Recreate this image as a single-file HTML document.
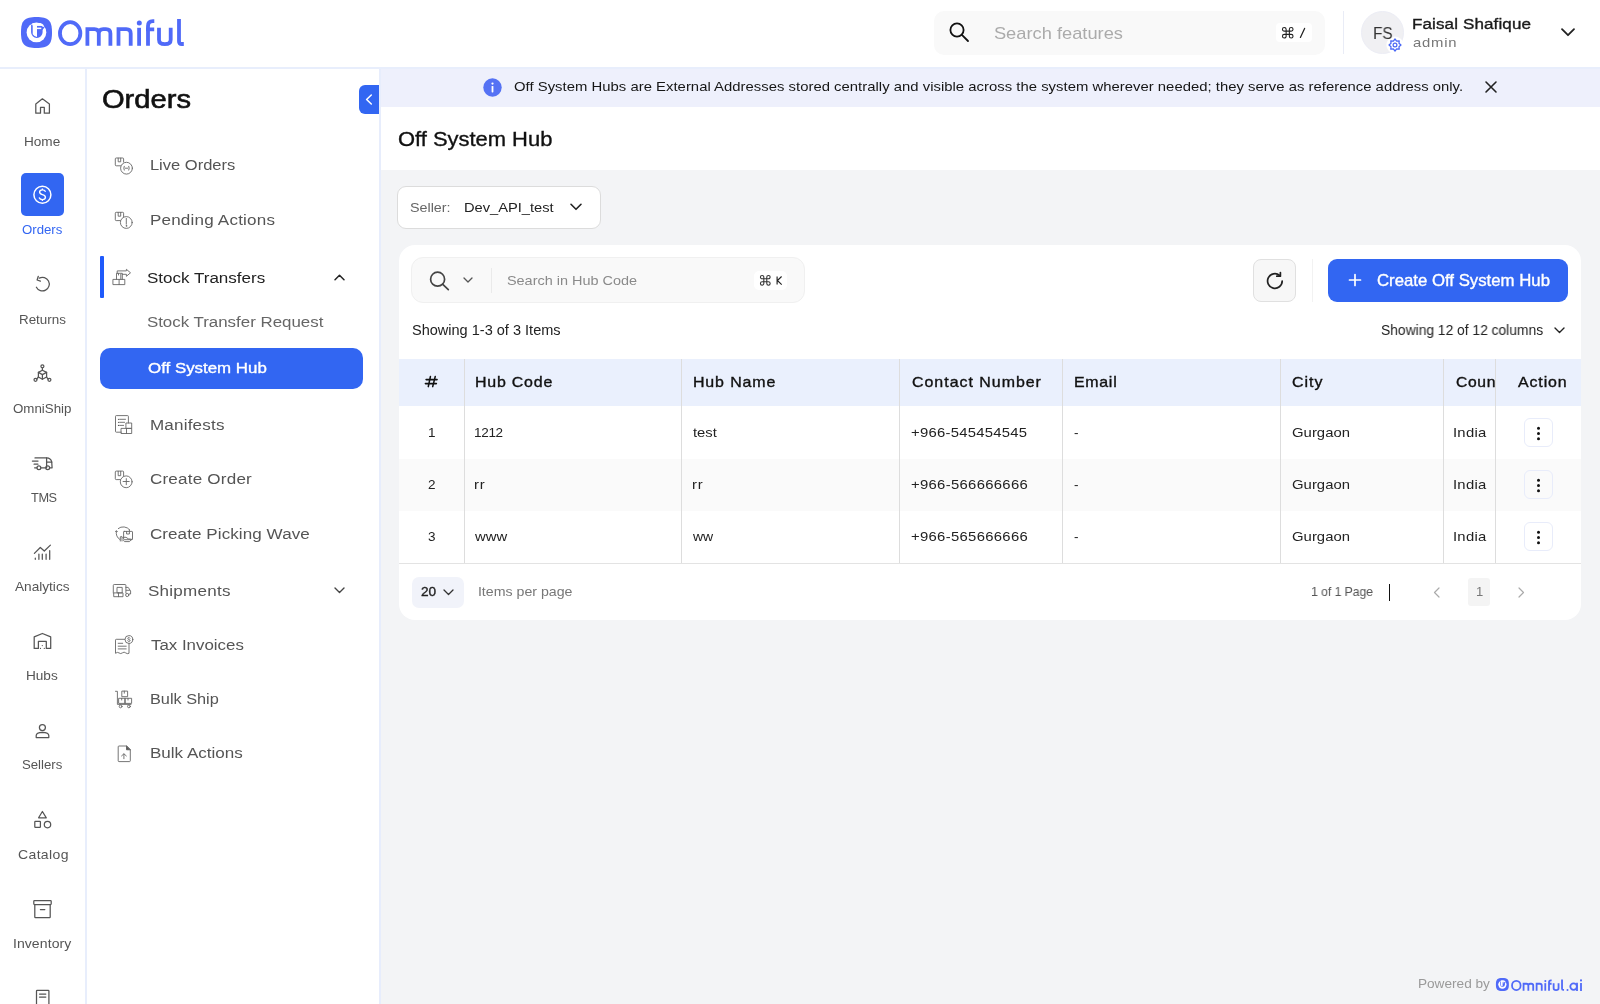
<!DOCTYPE html>
<html><head><meta charset="utf-8">
<style>
*{box-sizing:border-box;margin:0;padding:0}
html,body{width:1600px;height:1004px;overflow:hidden;background:#fff;font-family:"Liberation Sans",sans-serif;color:#222}
.a{position:absolute}
.t{position:absolute;white-space:nowrap;will-change:transform}
svg{position:absolute;display:block;overflow:visible}
.ic{fill:none;stroke:#555;stroke-width:1.25;stroke-linecap:round;stroke-linejoin:round}
.si{fill:none;stroke:#666;stroke-width:0.9;stroke-linecap:round;stroke-linejoin:round}
</style></head><body>

<!-- backgrounds -->
<div class="a" style="left:0;top:0;width:1600px;height:67px;background:#fff"></div>
<div class="a" style="left:0;top:67px;width:1600px;height:2px;background:#E8EEFC"></div>
<div class="a" style="left:85px;top:69px;width:2px;height:935px;background:#E8EEFC"></div>
<div class="a" style="left:379px;top:69px;width:2px;height:935px;background:#E7EDFC"></div>
<div class="a" style="left:381px;top:69px;width:1219px;height:935px;background:#F3F4F6"></div>

<!-- banner -->
<div class="a" style="left:381px;top:69px;width:1219px;height:38px;background:#EEF0FC"></div>
<svg style="left:482.6px;top:78px" width="19" height="19" viewBox="0 0 19 19"><circle cx="9.5" cy="9.5" r="9.2" fill="#5572F4"/><circle cx="9.5" cy="5.6" r="1.15" fill="#fff"/><rect x="8.6" y="8" width="1.8" height="6.4" rx="0.6" fill="#fff"/></svg>
<svg style="left:1485px;top:81px" width="12" height="12" viewBox="0 0 12 12"><path d="M1 1 L11 11 M11 1 L1 11" stroke="#222" stroke-width="1.6" stroke-linecap="round" fill="none"/></svg>

<!-- page header -->
<div class="a" style="left:381px;top:107px;width:1219px;height:63px;background:#fff"></div>

<!-- seller dropdown -->
<div class="a" style="left:397px;top:186px;width:204px;height:43px;background:#fff;border:1px solid #DCDCDC;border-radius:9px"></div>
<svg style="left:570px;top:203px" width="12" height="8" viewBox="0 0 12 8"><path d="M1 1.3 L6 6.3 L11 1.3" stroke="#222" stroke-width="1.6" fill="none" stroke-linecap="round" stroke-linejoin="round"/></svg>

<!-- card -->
<div class="a" style="left:399px;top:245px;width:1182px;height:375px;background:#fff;border-radius:16px"></div>
<div class="a" style="left:411px;top:257px;width:394px;height:46px;background:#F9F9F9;border:1px solid #F0F0F0;border-radius:12px"></div>
<svg style="left:429px;top:271px" width="21" height="20" viewBox="0 0 21 20"><circle cx="8.6" cy="8.2" r="7" stroke="#444" stroke-width="1.7" fill="none"/><path d="M13.8 13.4 L19.3 18.6" stroke="#444" stroke-width="1.7" stroke-linecap="round"/></svg>
<svg style="left:463px;top:277px" width="10" height="7" viewBox="0 0 10 7"><path d="M1 1 L5 5 L9 1" stroke="#555" stroke-width="1.3" fill="none" stroke-linecap="round" stroke-linejoin="round"/></svg>
<div class="a" style="left:491px;top:268px;width:1px;height:25px;background:#EAEAEA"></div>
<div class="a" style="left:754px;top:271px;width:33px;height:19px;background:#fff;border-radius:5px"></div>

<div class="a" style="left:1253px;top:259px;width:43px;height:43px;background:#F7F7F7;border:1px solid #E0E0E0;border-radius:8px"></div>
<svg style="left:1265px;top:271px" width="20" height="20" viewBox="0 0 20 20"><path d="M17.2 10 A7.3 7.3 0 1 1 14.6 4.4" stroke="#222" stroke-width="1.7" fill="none" stroke-linecap="round"/><path d="M15.4 1.6 V5.2 H11.8" stroke="#222" stroke-width="1.7" fill="none" stroke-linecap="round" stroke-linejoin="round"/></svg>
<div class="a" style="left:1312px;top:259px;width:1px;height:43px;background:#F2F2F2"></div>
<div class="a" style="left:1328px;top:259px;width:240px;height:43px;background:#3266F2;border-radius:9px"></div>
<svg style="left:1349px;top:274px" width="12" height="12" viewBox="0 0 12 12"><path d="M6 0.5 V11.5 M0.5 6 H11.5" stroke="#fff" stroke-width="1.7" stroke-linecap="round"/></svg>
<svg style="left:1554px;top:327px" width="11" height="7" viewBox="0 0 11 7"><path d="M1 1 L5.5 5.5 L10 1" stroke="#222" stroke-width="1.4" fill="none" stroke-linecap="round" stroke-linejoin="round"/></svg>

<!-- table -->
<div class="a" style="left:399px;top:359px;width:1182px;height:47px;background:#EAF0FD"></div>
<div class="a" style="left:399px;top:459px;width:1182px;height:52px;background:#FAFAFA"></div>
<div class="a" style="left:399px;top:563px;width:1182px;height:1px;background:#E3E3E3"></div>
<div class="a" style="left:464px;top:359px;width:1px;height:204px;background:#DDDDDD"></div>
<div class="a" style="left:681px;top:359px;width:1px;height:204px;background:#DDDDDD"></div>
<div class="a" style="left:899px;top:359px;width:1px;height:204px;background:#DDDDDD"></div>
<div class="a" style="left:1062px;top:359px;width:1px;height:204px;background:#DDDDDD"></div>
<div class="a" style="left:1280px;top:359px;width:1px;height:204px;background:#DDDDDD"></div>
<div class="a" style="left:1443px;top:359px;width:1px;height:204px;background:#DDDDDD"></div>
<div class="a" style="left:1495px;top:359px;width:1px;height:204px;background:#DDDDDD"></div>

<div class="a" style="left:1524px;top:418px;width:29px;height:29px;background:transparent;border:1px solid #E8ECFA;border-radius:6px"></div>
<div class="a" style="left:1524px;top:470px;width:29px;height:29px;background:transparent;border:1px solid #E8ECFA;border-radius:6px"></div>
<div class="a" style="left:1524px;top:522px;width:29px;height:29px;background:transparent;border:1px solid #E8ECFA;border-radius:6px"></div>
<svg style="left:1536px;top:426px" width="5" height="15" viewBox="0 0 5 15"><circle cx="2.5" cy="2.3" r="1.5" fill="#111"/><circle cx="2.5" cy="7.5" r="1.5" fill="#111"/><circle cx="2.5" cy="12.7" r="1.5" fill="#111"/></svg>
<svg style="left:1536px;top:478px" width="5" height="15" viewBox="0 0 5 15"><circle cx="2.5" cy="2.3" r="1.5" fill="#111"/><circle cx="2.5" cy="7.5" r="1.5" fill="#111"/><circle cx="2.5" cy="12.7" r="1.5" fill="#111"/></svg>
<svg style="left:1536px;top:530px" width="5" height="15" viewBox="0 0 5 15"><circle cx="2.5" cy="2.3" r="1.5" fill="#111"/><circle cx="2.5" cy="7.5" r="1.5" fill="#111"/><circle cx="2.5" cy="12.7" r="1.5" fill="#111"/></svg>

<svg style="left:418px;top:370px" width="27" height="24" viewBox="418 370 27 24"><path d="M426.1 379.6 H437.1 M425.4 383.6 H436.4 M430.4 376.6 L428.3 386.6 M435.2 376.6 L432.7 386.6" stroke="#111" stroke-width="1.55" stroke-linecap="round" fill="none"/></svg>
<!-- pagination -->
<div class="a" style="left:412px;top:577px;width:52px;height:31px;background:#F1F3FA;border-radius:7px"></div>
<svg style="left:443px;top:589px" width="11" height="7" viewBox="0 0 11 7"><path d="M1 1 L5.5 5.5 L10 1" stroke="#333" stroke-width="1.3" fill="none" stroke-linecap="round" stroke-linejoin="round"/></svg>
<div class="a" style="left:1389px;top:584px;width:1px;height:17px;background:#111"></div>
<svg style="left:1433px;top:587px" width="8" height="11" viewBox="0 0 8 11"><path d="M6 1 L1.5 5.5 L6 10" stroke="#AAA" stroke-width="1.2" fill="none" stroke-linecap="round" stroke-linejoin="round"/></svg>
<div class="a" style="left:1468px;top:578px;width:22px;height:28px;background:#F4F4F4;border-radius:3px"></div>
<svg style="left:1517px;top:587px" width="8" height="11" viewBox="0 0 8 11"><path d="M2 1 L6.5 5.5 L2 10" stroke="#AAA" stroke-width="1.2" fill="none" stroke-linecap="round" stroke-linejoin="round"/></svg>

<!-- header -->
<svg style="left:21px;top:17px" width="31" height="31" viewBox="0 0 31 31">
  <path d="M15.5 0 C27.5 0 31 3.5 31 15.5 C31 27.5 27.5 31 15.5 31 C3.5 31 0 27.5 0 15.5 C0 3.5 3.5 0 15.5 0 Z" fill="#506AF8"/>
  <circle cx="15.45" cy="15.45" r="9.85" fill="#fff"/>
  <path d="M10.1 8.3 Q10.1 7.5 10.9 7.5 Q11.7 7.5 11.7 8.3 V8.8 H20.3 L23.6 10.4 Q21.6 11.8 21.6 13.2 V15.2 A5.75 5.75 0 0 1 10.1 15.2 Z" fill="#506AF8"/>
  <path d="M11.7 6 H19.2 Q21.2 6.4 22.6 8.1 L22.1 9.6 L20.3 8.8 H16 V19.9 Q13.2 19.5 11.7 17.3 Z" fill="#fff"/>
  <rect x="15.6" y="10.6" width="4.7" height="1.5" fill="#fff"/>
</svg>
<svg style="left:0;top:0" width="200" height="60" viewBox="0 0 200 60"><g fill="none" stroke="#506AF8" stroke-width="3.8">
  <ellipse cx="70.15" cy="33.2" rx="10.2" ry="11"/>
  <path d="M87.4 45.8 V29.2 H94.4 Q98.8 29.2 98.8 33.6 V45.8 M98.8 33.6 Q98.8 29.2 103.2 29.2 H106 Q110.4 29.2 110.4 33.6 V45.8"/>
  <path d="M118.5 45.8 V29.2 H126.3 Q130.7 29.2 130.7 33.6 V45.8"/>
  <path d="M139.1 45.8 V27.8"/>
  <path d="M148 45.8 V26 Q148 21.2 152.8 21.2 H154.3 M146 29.3 H154.2"/>
  <path d="M159 27.8 V39.8 Q159 44.2 164.85 44.2 Q170.7 44.2 170.7 39.8 V27.8"/>
  <path d="M179 19 V41.2 Q179 44 181.8 44 H183.8"/>
</g><circle cx="139.3" cy="22.9" r="2.5" fill="#506AF8"/></svg>
<div class="a" style="left:934px;top:11px;width:391px;height:44px;background:#F9F9F9;border-radius:10px"></div>
<svg style="left:949px;top:22px" width="21" height="21" viewBox="0 0 21 21"><circle cx="8" cy="8" r="6.6" stroke="#111" stroke-width="1.8" fill="none"/><path d="M12.9 12.9 L19 19" stroke="#111" stroke-width="1.8" stroke-linecap="round"/></svg>
<div class="a" style="left:1276px;top:23px;width:36px;height:19px;background:#fff;border-radius:4px"></div>
<div class="a" style="left:1343px;top:11px;width:1px;height:43px;background:#E9ECF6"></div>
<div class="a" style="left:1361px;top:11px;width:43px;height:43px;border-radius:50%;background:#F0F0F3;border:1px solid #ECEDF5"></div>
<svg style="left:1385.7px;top:35.6px" width="18" height="18" viewBox="0 0 18 18"><circle cx="9" cy="9" r="8.6" fill="#fff"/><path d="M9.00 3.00 L10.65 5.03 L13.24 4.76 L12.97 7.35 L15.00 9.00 L12.97 10.65 L13.24 13.24 L10.65 12.97 L9.00 15.00 L7.35 12.97 L4.76 13.24 L5.03 10.65 L3.00 9.00 L5.03 7.35 L4.76 4.76 L7.35 5.03 Z" stroke="#4A68F5" stroke-width="1.25" fill="none" stroke-linejoin="round"/><circle cx="9" cy="9" r="1.9" stroke="#4A68F5" stroke-width="1.2" fill="none"/></svg>
<svg style="left:1561px;top:28px" width="14" height="9" viewBox="0 0 14 9"><path d="M1 1.2 L7 7.2 L13 1.2" stroke="#222" stroke-width="1.8" fill="none" stroke-linecap="round" stroke-linejoin="round"/></svg>

<svg style="left:1282.4px;top:27px" width="11.5" height="11.5" viewBox="0 0 10 10"><path d="M3.6 3.6 H2 A1.6 1.6 0 1 1 3.6 2 V8 A1.6 1.6 0 1 1 2 6.4 H8 A1.6 1.6 0 1 1 6.4 8 V2 A1.6 1.6 0 1 1 8 3.6 Z" stroke="#222" stroke-width="0.95" fill="none"/></svg>
<svg style="left:1295px;top:25px" width="14" height="15" viewBox="1295 25 14 15"><path d="M1304.6 28.4 L1300.4 37.4" stroke="#222" stroke-width="1.25" stroke-linecap="round"/></svg>
<svg style="left:759.6px;top:274.6px" width="10.6" height="10.6" viewBox="0 0 10 10"><path d="M3.6 3.6 H2 A1.6 1.6 0 1 1 3.6 2 V8 A1.6 1.6 0 1 1 2 6.4 H8 A1.6 1.6 0 1 1 6.4 8 V2 A1.6 1.6 0 1 1 8 3.6 Z" stroke="#333" stroke-width="1.0" fill="none"/></svg>
<svg style="left:772px;top:272px" width="14" height="16" viewBox="772 272 14 16"><path d="M777.1 276.6 V284.6 M781.6 276.5 L777.4 280.5 L781.7 284.6" stroke="#222" stroke-width="1.15" fill="none" stroke-linejoin="miter"/></svg>
<!-- rail icons -->
<!-- home -->
<svg style="left:25px;top:88px" width="35" height="35" viewBox="0 0 35 35"><path class="ic" d="M10.8 25.2 V16 L17.4 10.8 L24.4 16 V25.2 H19.3 V19.3 H15.5 V25.2 Z"/></svg>
<!-- orders active -->
<div class="a" style="left:21px;top:173px;width:43px;height:43px;background:#3266F2;border-radius:5px"></div>
<svg style="left:25px;top:177px" width="35" height="35" viewBox="0 0 35 35"><circle cx="17.4" cy="17.8" r="8.5" stroke="#fff" stroke-width="1.5" fill="none"/><path d="M20.2 14.3 Q19.6 12.9 17.4 12.9 Q14.6 12.9 14.6 15.1 Q14.6 16.9 17.4 17.6 Q20.4 18.3 20.4 20.3 Q20.4 22.6 17.4 22.6 Q15 22.6 14.4 21" stroke="#fff" stroke-width="1.4" fill="none" stroke-linecap="round"/><path d="M17.4 11.6 V12.9 M17.4 22.6 V24" stroke="#fff" stroke-width="1.3"/></svg>
<!-- returns -->
<svg style="left:25px;top:266px" width="35" height="35" viewBox="0 0 35 35"><path class="ic" d="M11.4 21.2 A6.8 6.8 0 1 0 14.3 12.1"/><path class="ic" d="M13.3 10.3 L12.1 14 L15.4 15.2"/></svg>
<!-- omniship -->
<svg style="left:25px;top:355px" width="35" height="35" viewBox="0 0 35 35"><g class="ic"><circle cx="17.4" cy="11.3" r="1.5"/><path d="M17.4 12.8 V15.2"/><path d="M13.4 17.4 L17.4 15.2 L21.6 17.4 V22 L17.4 24.2 L13.4 22 Z"/><path d="M13.4 17.4 L17.4 19.6 L21.6 17.4 M17.4 19.6 V24.2"/><circle cx="10.5" cy="24.8" r="1.5"/><circle cx="24.4" cy="24.8" r="1.5"/><path d="M11.8 24 L13.4 22 M23.1 24 L21.6 22"/></g></svg>
<!-- tms -->
<svg style="left:25px;top:445px" width="35" height="35" viewBox="0 0 35 35"><g class="ic"><path d="M10 12.9 H21.6 V22.8"/><path d="M21.6 12.9 Q25.8 13 26.7 16.8 L27.1 22.8 H25"/><path d="M21.6 17 H26.8"/><path d="M7.4 16 H13 M9.1 19.2 H12.9 M9.6 22.8 H11.9 M15.9 22.8 H20.6"/><circle cx="13.9" cy="22.8" r="1.9"/><circle cx="22.7" cy="22.8" r="1.9"/></g></svg>
<!-- analytics -->
<svg style="left:25px;top:535px" width="35" height="35" viewBox="0 0 35 35"><g class="ic"><path d="M9.4 18.4 L15.3 12.5 L19.3 16 L25.4 10.1"/><path d="M10.3 23.2 V24.3 M13.9 19 V24.3 M17.3 19 V24.3 M21.1 19 V24.3 M24.7 15.6 V24.3"/></g></svg>
<!-- hubs -->
<svg style="left:25px;top:625px" width="35" height="35" viewBox="0 0 35 35"><g class="ic"><path d="M9.2 23.4 V11.9 L17.4 8.5 L25.7 11.9 V23.4 H21.3 V16.4 H13.4 V23.4 Z"/></g><circle cx="17.3" cy="20.6" r="0.6" fill="#555"/><circle cx="15.5" cy="23.4" r="0.6" fill="#555"/><circle cx="19.3" cy="23.4" r="0.6" fill="#555"/></svg>
<!-- sellers -->
<svg style="left:25px;top:715px" width="35" height="35" viewBox="0 0 35 35"><g class="ic"><circle cx="17.4" cy="12.5" r="3"/><path d="M11.2 22.6 V20.4 Q11.2 17.4 17.4 17.3 Q23.8 17.4 23.8 20.4 V22.6 Z"/></g></svg>
<!-- catalog -->
<svg style="left:25px;top:800px" width="35" height="35" viewBox="0 0 35 35"><g class="ic"><path d="M17.4 11.5 L13.6 17.8 H21.3 Z"/><rect x="9.8" y="21.3" width="5.6" height="6" rx="0.6"/><circle cx="22.5" cy="24.6" r="3.2"/></g></svg>
<!-- inventory -->
<svg style="left:25px;top:890px" width="35" height="35" viewBox="0 0 35 35"><g class="ic"><rect x="8.8" y="10.6" width="17.4" height="3.9" rx="0.7"/><path d="M9.8 14.5 V27 Q9.8 27.6 10.4 27.6 H24.6 Q25.2 27.6 25.2 27 V14.5"/><path d="M15.4 19.5 H19.8"/></g></svg>
<!-- last (cut) -->
<svg style="left:25px;top:980px" width="35" height="35" viewBox="0 0 35 35"><g class="ic"><path d="M11.5 24 V11 Q11.5 10.3 12.2 10.3 H23.2 Q23.9 10.3 23.9 11 V24"/><path d="M14.5 14 H20.8 M14.5 17 H20.8"/></g></svg>

<!-- sidebar -->
<div class="a" style="left:359px;top:85px;width:20px;height:29px;background:#3266F2;border-radius:6px 0 0 6px"></div>
<svg style="left:365px;top:94px" width="8" height="11" viewBox="0 0 8 11"><path d="M6.3 1 L1.6 5.5 L6.3 10" stroke="#fff" stroke-width="1.5" fill="none" stroke-linecap="round" stroke-linejoin="round"/></svg>
<div class="a" style="left:100px;top:256px;width:4.3px;height:41.5px;background:#1F5AFB;border-radius:1px"></div>
<div class="a" style="left:100px;top:348px;width:263px;height:41px;background:#3266F2;border-radius:10px"></div>
<svg style="left:334px;top:273px" width="11" height="8" viewBox="0 0 11 8"><path d="M1 6.8 L5.5 2.3 L10 6.8" stroke="#222" stroke-width="1.5" fill="none" stroke-linecap="round" stroke-linejoin="round"/></svg>
<svg style="left:334px;top:587px" width="11" height="8" viewBox="0 0 11 8"><path d="M1 1 L5.5 5.5 L10 1" stroke="#444" stroke-width="1.4" fill="none" stroke-linecap="round" stroke-linejoin="round"/></svg>

<!-- live orders -->
<svg style="left:108px;top:150px" width="32" height="32" viewBox="0 0 32 32"><g class="si"><path d="M12.5 15.8 H8.2 Q7.3 15.8 7.3 14.9 V8.9 Q7.3 8 8.2 8 H14.7 Q15.6 8 15.6 8.9 V12"/><path d="M10.2 8.2 V11.8 H12.7 V8.2"/><circle cx="18.5" cy="18.2" r="5.9"/><path d="M16.2 16.3 Q15.3 18.2 16.2 20.1 M20.8 16.3 Q21.7 18.2 20.8 20.1 M17.3 18.2 H19.7"/></g></svg>
<!-- pending -->
<svg style="left:108px;top:205px" width="32" height="32" viewBox="0 0 32 32"><g class="si"><path d="M12.4 15.6 H8.2 Q7.3 15.6 7.3 14.7 V8.2 Q7.3 7.3 8.2 7.3 H14.7 Q15.6 7.3 15.6 8.2 V11.6"/><path d="M10.2 7.5 V11.2 H12.7 V7.5"/><circle cx="18.3" cy="17.5" r="5.9"/><path d="M18.3 13.4 V19.2"/><circle cx="18.3" cy="20.9" r="0.4"/></g></svg>
<!-- stock transfers -->
<svg style="left:106px;top:262px" width="32" height="32" viewBox="0 0 32 32"><g class="si"><rect x="7.3" y="17.4" width="11.5" height="5.2"/><path d="M13.1 17.4 V22.6"/><path d="M10.5 17.4 V11.3 H16.3 V17.4"/><path d="M11.2 11.3 V8.9 H20.4 V7.3 L24.5 10.8 L20.4 14.3 V12.3 H16.3"/><path d="M12.5 11.5 V13 M14.8 12.3 V17.4"/></g></svg>
<!-- manifests -->
<svg style="left:108px;top:408px" width="32" height="32" viewBox="0 0 32 32"><g class="si"><path d="M13.3 24.2 H8.3 Q7.5 24.2 7.5 23.4 V8.4 Q7.5 7.6 8.3 7.6 H19.6 Q20.4 7.6 20.4 8.4 V15"/><path d="M11.6 11.3 H17.5 M11.6 14.3 H16.6 M11.6 17.4 H15.6"/><rect x="13.4" y="20.4" width="10.3" height="5.1"/><path d="M18.5 20.4 V25.5"/><rect x="18.3" y="15" width="5.4" height="5.4"/></g><circle cx="10.5" cy="11.3" r="0.6" fill="#555"/><circle cx="10.5" cy="14.3" r="0.6" fill="#555"/><circle cx="10.5" cy="17.4" r="0.6" fill="#555"/></svg>
<!-- create order -->
<svg style="left:108px;top:463px" width="32" height="32" viewBox="0 0 32 32"><g class="si"><path d="M12.4 16.6 H8.2 Q7.3 16.6 7.3 15.7 V9 Q7.3 8.1 8.2 8.1 H14.7 Q15.6 8.1 15.6 9 V12.9"/><path d="M10.2 8.3 V12.7 H12.7 V8.3"/><circle cx="18.2" cy="18.8" r="5.9"/><path d="M15.1 18.5 H21.2 M18.3 15.6 V21.7"/></g></svg>
<!-- picking wave -->
<svg style="left:108px;top:518px" width="32" height="32" viewBox="0 0 32 32"><g class="si"><path d="M10.3 10.5 A8 8 0 0 1 21.6 11.8"/><path d="M8.4 13.3 A8 8 0 0 0 11.8 21.5"/><path d="M7.5 13.6 L8.4 12.6 L9.4 13.6"/><rect x="15.6" y="13.4" width="8.9" height="8.3" rx="0.6"/><path d="M18.6 13.4 V16 H21.4 V11.8"/><path d="M12.3 23 V18.8 Q13.2 18.1 14 18.8 V23"/><path d="M14.8 19.3 H18 Q19.6 21.3 23.8 21.3 L21.5 23.6 H16.6 L15.5 22.6"/></g></svg>
<!-- shipments -->
<svg style="left:106px;top:574px" width="32" height="32" viewBox="0 0 32 32"><g class="si"><path d="M7.3 19 V11.4 Q7.3 10.5 8.2 10.5 H19 Q19.9 10.5 19.9 11.4 V19"/><path d="M19.9 13.4 H22.2 L24.6 17 V20 H23.3"/><path d="M20.3 16.3 H23.5"/><rect x="8.1" y="18.9" width="8.9" height="3.8"/><path d="M12.5 18.9 V22.7"/><rect x="11.4" y="13.4" width="4.8" height="5.5"/><circle cx="21.2" cy="21" r="1.6"/></g></svg>
<!-- tax -->
<svg style="left:108px;top:628px" width="32" height="32" viewBox="0 0 32 32"><g class="si"><path d="M16.8 11.3 H8.3 Q7.5 11.3 7.5 12.1 V25.3 Q9.5 23.7 11 24.9 Q12.8 26.3 14.3 24.9 Q16.2 23.4 17.7 24.9 Q19.2 26.2 21 25.3 V15.4"/><path d="M10.2 15.3 H14.7 M10.2 18.2 H18.2 M10.2 20.9 H18.2"/><circle cx="20.9" cy="11.5" r="3.9"/><path d="M22 10.2 Q21.6 9.6 20.9 9.6 Q19.8 9.6 19.8 10.5 Q19.8 11.3 20.9 11.5 Q22.1 11.7 22.1 12.6 Q22.1 13.4 20.9 13.4 Q20 13.4 19.7 12.8"/></g></svg>
<!-- bulk ship -->
<svg style="left:108px;top:683px" width="32" height="32" viewBox="0 0 32 32"><g class="si"><path d="M7.5 8.3 H9.4 V21.4 H23"/><rect x="14.2" y="8.1" width="5.4" height="5.6"/><rect x="11" y="15.3" width="6.2" height="5.1"/><rect x="17.2" y="15.3" width="6.4" height="5.1"/><path d="M16.3 8.1 V10.2 M13.7 15.3 V17 M20 15.3 V17"/><circle cx="12.6" cy="23.4" r="1.4"/><circle cx="20.9" cy="23.4" r="1.4"/></g></svg>
<!-- bulk actions -->
<svg style="left:108px;top:738px" width="32" height="32" viewBox="0 0 32 32"><g class="si"><path d="M18.5 8 H11 Q10.2 8 10.2 8.8 V22.8 Q10.2 23.6 11 23.6 H21.5 Q22.3 23.6 22.3 22.8 V11.8 Z"/><path d="M18.5 8 V11.8 H22.3"/><path d="M15.9 20.7 V16 M13.6 17.9 L15.9 15.8 L18.3 17.9"/></g><path d="M18.5 8 V11.8 H22.3 Z" fill="#555"/></svg>

<!-- footer logo -->
<svg style="left:1480px;top:970px" width="120" height="30" viewBox="1480 970 120 30">
<g transform="translate(1495.9 978.1) scale(0.4194)">
  <path d="M15.5 0 C27.5 0 31 3.5 31 15.5 C31 27.5 27.5 31 15.5 31 C3.5 31 0 27.5 0 15.5 C0 3.5 3.5 0 15.5 0 Z" fill="#506AF8"/>
  <circle cx="15.45" cy="15.45" r="9.85" fill="#fff"/>
  <path d="M10.1 8.3 Q10.1 7.5 10.9 7.5 Q11.7 7.5 11.7 8.3 V8.8 H20.3 L23.6 10.4 Q21.6 11.8 21.6 13.2 V15.2 A5.75 5.75 0 0 1 10.1 15.2 Z" fill="#506AF8"/>
  <path d="M11.7 6 H19.2 Q21.2 6.4 22.6 8.1 L22.1 9.6 L20.3 8.8 H16 V19.9 Q13.2 19.5 11.7 17.3 Z" fill="#fff"/>
  <rect x="15.6" y="10.6" width="4.7" height="1.5" fill="#fff"/>
</g>
<g transform="translate(1486.85 971.47) scale(0.42)"><g fill="none" stroke="#506AF8" stroke-width="4.3">
  <ellipse cx="70.15" cy="33.2" rx="10.2" ry="11"/>
  <path d="M87.4 45.8 V29.2 H94.4 Q98.8 29.2 98.8 33.6 V45.8 M98.8 33.6 Q98.8 29.2 103.2 29.2 H106 Q110.4 29.2 110.4 33.6 V45.8"/>
  <path d="M118.5 45.8 V29.2 H126.3 Q130.7 29.2 130.7 33.6 V45.8"/>
  <path d="M139.1 45.8 V27.8"/>
  <path d="M148 45.8 V26 Q148 21.2 152.8 21.2 H154.3 M146 29.3 H154.2"/>
  <path d="M159 27.8 V39.8 Q159 44.2 164.85 44.2 Q170.7 44.2 170.7 39.8 V27.8"/>
  <path d="M179 19 V41.2 Q179 44 181.8 44 H183.8"/>
</g><circle cx="139.3" cy="22.9" r="2.5" fill="#506AF8"/></g>
<circle cx="1567.5" cy="989.9" r="1" fill="#506AF8"/>
<circle cx="1573.6" cy="986.6" r="3.3" stroke="#506AF8" stroke-width="1.8" fill="none"/>
<path d="M1577 982.7 V991" stroke="#506AF8" stroke-width="1.8"/>
<path d="M1581 983 V991" stroke="#506AF8" stroke-width="1.8"/>
<circle cx="1581" cy="980.4" r="1.05" fill="#506AF8"/>
</svg>
<div class="t" style="left:993.75px;top:14.00px;font-size:17.00px;line-height:40px;letter-spacing:0.000px;color:#ABABAB;transform:scaleX(1.0756);transform-origin:1.00px 0;">Search features</div>
<div class="t" style="left:1280.30px;top:13.00px;font-size:14.50px;line-height:40px;letter-spacing:0.000px;color:#333333;transform:scaleX(1.0810);transform-origin:2.00px 0;display:none;">⌘ /</div>
<div class="t" style="left:1372.70px;top:13.00px;font-size:16.25px;line-height:40px;letter-spacing:-0.053px;color:#333333;transform:scaleX(0.9500);transform-origin:1.00px 0;">FS</div>
<div class="t" style="left:1412.40px;top:4.00px;font-size:15.50px;line-height:40px;letter-spacing:0.104px;color:#1A1A1A;transform:scaleX(1.1000);transform-origin:1.00px 0;-webkit-text-stroke:0.35px currentColor;">Faisal Shafique</div>
<div class="t" style="left:1413.40px;top:23.00px;font-size:13.50px;line-height:40px;letter-spacing:0.682px;color:#777777;transform:scaleX(1.1000);transform-origin:0.00px 0;">admin</div>
<div class="t" style="left:24.00px;top:122.00px;font-size:12.75px;line-height:40px;letter-spacing:0.000px;color:#555555;transform:scaleX(1.0667);transform-origin:1.00px 0;">Home</div>
<div class="t" style="left:22.00px;top:210.00px;font-size:12.75px;line-height:40px;letter-spacing:0.000px;color:#3366F2;transform:scaleX(1.0359);transform-origin:0.00px 0;">Orders</div>
<div class="t" style="left:18.70px;top:300.00px;font-size:12.75px;line-height:40px;letter-spacing:0.000px;color:#555555;transform:scaleX(1.0512);transform-origin:1.00px 0;">Returns</div>
<div class="t" style="left:12.90px;top:389.00px;font-size:12.75px;line-height:40px;letter-spacing:0.000px;color:#555555;transform:scaleX(1.0446);transform-origin:0.00px 0;">OmniShip</div>
<div class="t" style="left:31.20px;top:478.00px;font-size:12.75px;line-height:40px;letter-spacing:-0.400px;color:#555555;transform:scaleX(1.0000);transform-origin:0.00px 0;">TMS</div>
<div class="t" style="left:14.80px;top:567.00px;font-size:12.75px;line-height:40px;letter-spacing:0.000px;color:#555555;transform:scaleX(1.0686);transform-origin:0.00px 0;">Analytics</div>
<div class="t" style="left:25.80px;top:656.00px;font-size:12.75px;line-height:40px;letter-spacing:0.000px;color:#555555;transform:scaleX(1.0690);transform-origin:1.00px 0;">Hubs</div>
<div class="t" style="left:22.10px;top:745.00px;font-size:12.75px;line-height:40px;letter-spacing:0.000px;color:#555555;transform:scaleX(1.0342);transform-origin:1.00px 0;">Sellers</div>
<div class="t" style="left:17.60px;top:835.00px;font-size:12.75px;line-height:40px;letter-spacing:0.318px;color:#555555;transform:scaleX(1.1000);transform-origin:0.00px 0;">Catalog</div>
<div class="t" style="left:12.90px;top:924.00px;font-size:12.75px;line-height:40px;letter-spacing:0.080px;color:#555555;transform:scaleX(1.1000);transform-origin:1.00px 0;">Inventory</div>
<div class="t" style="left:101.75px;top:79.00px;font-size:26.50px;line-height:40px;letter-spacing:0.000px;color:#111111;transform:scaleX(1.1000);transform-origin:1.00px 0;-webkit-text-stroke:0.6px currentColor;">Orders</div>
<div class="t" style="left:149.60px;top:145.00px;font-size:15.50px;line-height:40px;letter-spacing:0.000px;color:#555555;transform:scaleX(1.0658);transform-origin:1.00px 0;">Live Orders</div>
<div class="t" style="left:149.60px;top:200.00px;font-size:15.50px;line-height:40px;letter-spacing:0.182px;color:#555555;transform:scaleX(1.1000);transform-origin:1.00px 0;">Pending Actions</div>
<div class="t" style="left:147.40px;top:258.00px;font-size:15.50px;line-height:40px;letter-spacing:0.000px;color:#222222;transform:scaleX(1.0991);transform-origin:1.00px 0;">Stock Transfers</div>
<div class="t" style="left:147.40px;top:302.00px;font-size:15.50px;line-height:40px;letter-spacing:0.000px;color:#666666;transform:scaleX(1.0894);transform-origin:1.00px 0;">Stock Transfer Request</div>
<div class="t" style="left:148.00px;top:348.00px;font-size:15.50px;line-height:40px;letter-spacing:0.000px;color:#FFFFFF;transform:scaleX(1.0890);transform-origin:0.00px 0;-webkit-text-stroke:0.35px currentColor;">Off System Hub</div>
<div class="t" style="left:149.70px;top:405.00px;font-size:15.50px;line-height:40px;letter-spacing:0.182px;color:#555555;transform:scaleX(1.1000);transform-origin:1.00px 0;">Manifests</div>
<div class="t" style="left:149.70px;top:459.00px;font-size:15.50px;line-height:40px;letter-spacing:0.198px;color:#555555;transform:scaleX(1.1000);transform-origin:1.00px 0;">Create Order</div>
<div class="t" style="left:149.70px;top:514.00px;font-size:15.50px;line-height:40px;letter-spacing:0.066px;color:#555555;transform:scaleX(1.1000);transform-origin:1.00px 0;">Create Picking Wave</div>
<div class="t" style="left:147.70px;top:571.00px;font-size:15.50px;line-height:40px;letter-spacing:0.227px;color:#555555;transform:scaleX(1.1000);transform-origin:1.00px 0;">Shipments</div>
<div class="t" style="left:150.90px;top:625.00px;font-size:15.50px;line-height:40px;letter-spacing:0.000px;color:#555555;transform:scaleX(1.0882);transform-origin:0.00px 0;">Tax Invoices</div>
<div class="t" style="left:149.90px;top:679.00px;font-size:15.50px;line-height:40px;letter-spacing:0.000px;color:#555555;transform:scaleX(1.0516);transform-origin:1.00px 0;">Bulk Ship</div>
<div class="t" style="left:149.90px;top:733.00px;font-size:15.50px;line-height:40px;letter-spacing:0.008px;color:#555555;transform:scaleX(1.1000);transform-origin:1.00px 0;">Bulk Actions</div>
<div class="t" style="left:514.40px;top:67.00px;font-size:13.50px;line-height:40px;letter-spacing:0.019px;color:#161616;transform:scaleX(1.1000);transform-origin:0.00px 0;">Off System Hubs are External Addresses stored centrally and visible across the system wherever needed; they serve as reference address only.</div>
<div class="t" style="left:397.75px;top:119.00px;font-size:20.50px;line-height:40px;letter-spacing:0.000px;color:#111111;transform:scaleX(1.0699);transform-origin:1.00px 0;-webkit-text-stroke:0.35px currentColor;">Off System Hub</div>
<div class="t" style="left:409.75px;top:188.00px;font-size:13.50px;line-height:40px;letter-spacing:0.000px;color:#666666;transform:scaleX(1.0611);transform-origin:1.00px 0;">Seller:</div>
<div class="t" style="left:463.75px;top:188.00px;font-size:13.50px;line-height:40px;letter-spacing:0.000px;color:#222222;transform:scaleX(1.0878);transform-origin:1.00px 0;">Dev_API_test</div>
<div class="t" style="left:506.50px;top:261.00px;font-size:13.50px;line-height:40px;letter-spacing:0.000px;color:#8A8A8A;transform:scaleX(1.0708);transform-origin:1.00px 0;">Search in Hub Code</div>
<div class="t" style="left:758.50px;top:260.00px;font-size:12.25px;line-height:40px;letter-spacing:0.000px;color:#333333;transform:scaleX(1.0136);transform-origin:1.00px 0;display:none;">⌘ K</div>
<div class="t" style="left:1377.00px;top:261.00px;font-size:15.75px;line-height:40px;letter-spacing:0.000px;color:#FFFFFF;transform:scaleX(1.0642);transform-origin:0.00px 0;-webkit-text-stroke:0.35px currentColor;">Create Off System Hub</div>
<div class="t" style="left:412.00px;top:310.00px;font-size:14.00px;line-height:40px;letter-spacing:0.000px;color:#222222;transform:scaleX(1.0380);transform-origin:1.00px 0;">Showing 1-3 of 3 Items</div>
<div class="t" style="left:1380.75px;top:310.00px;font-size:14.00px;line-height:40px;letter-spacing:0.000px;color:#222222;transform:scaleX(0.9871);transform-origin:1.00px 0;">Showing 12 of 12 columns</div>
<div class="t" style="left:425.00px;top:362.00px;font-size:14.50px;line-height:40px;letter-spacing:0.000px;color:#111111;transform:scaleX(1.0000);transform-origin:0.00px 0;-webkit-text-stroke:0.35px currentColor;display:none;">#</div>
<div class="t" style="left:475.00px;top:362.00px;font-size:14.50px;line-height:40px;letter-spacing:0.727px;color:#111111;transform:scaleX(1.1000);transform-origin:1.00px 0;-webkit-text-stroke:0.35px currentColor;">Hub Code</div>
<div class="t" style="left:693.25px;top:362.00px;font-size:14.50px;line-height:40px;letter-spacing:0.805px;color:#111111;transform:scaleX(1.1000);transform-origin:1.00px 0;-webkit-text-stroke:0.35px currentColor;">Hub Name</div>
<div class="t" style="left:911.60px;top:362.00px;font-size:14.50px;line-height:40px;letter-spacing:0.895px;color:#111111;transform:scaleX(1.1000);transform-origin:0.00px 0;-webkit-text-stroke:0.35px currentColor;">Contact Number</div>
<div class="t" style="left:1074.00px;top:362.00px;font-size:14.50px;line-height:40px;letter-spacing:0.659px;color:#111111;transform:scaleX(1.1000);transform-origin:1.00px 0;-webkit-text-stroke:0.35px currentColor;">Email</div>
<div class="t" style="left:1292.00px;top:362.00px;font-size:14.50px;line-height:40px;letter-spacing:0.879px;color:#111111;transform:scaleX(1.1000);transform-origin:0.00px 0;-webkit-text-stroke:0.35px currentColor;">City</div>
<div class="t" style="left:1518.00px;top:362.00px;font-size:14.50px;line-height:40px;letter-spacing:0.800px;color:#111111;transform:scaleX(1.1000);transform-origin:0.00px 0;-webkit-text-stroke:0.35px currentColor;">Action</div>
<div class="t" style="left:420.50px;top:572.00px;font-size:13.00px;line-height:40px;letter-spacing:-0.000px;color:#222222;transform:scaleX(1.0500);transform-origin:0.00px 0;-webkit-text-stroke:0.35px currentColor;">20</div>
<div class="t" style="left:478.30px;top:572.00px;font-size:13.00px;line-height:40px;letter-spacing:0.000px;color:#777777;transform:scaleX(1.0906);transform-origin:1.00px 0;">Items per page</div>
<div class="t" style="left:1311.30px;top:572.00px;font-size:13.00px;line-height:40px;letter-spacing:-0.121px;color:#555555;transform:scaleX(0.9500);transform-origin:1.00px 0;">1 of 1 Page</div>
<div class="t" style="left:1475.70px;top:572.00px;font-size:13.00px;line-height:40px;letter-spacing:0.000px;color:#777777;transform:scaleX(1.0000);transform-origin:1.00px 0;">1</div>
<div class="t" style="left:1418.00px;top:964.00px;font-size:13.00px;line-height:40px;letter-spacing:0.000px;color:#9A9A9A;transform:scaleX(1.0485);transform-origin:1.00px 0;">Powered by</div>
<div class="t" style="left:427.70px;top:413.00px;font-size:13.50px;line-height:40px;letter-spacing:0.000px;color:#222222;transform:scaleX(1.0000);transform-origin:1.00px 0;">1</div>
<div class="t" style="left:473.60px;top:413.00px;font-size:13.50px;line-height:40px;letter-spacing:-0.300px;color:#222222;transform:scaleX(1.0000);transform-origin:1.00px 0;">1212</div>
<div class="t" style="left:692.50px;top:413.00px;font-size:13.50px;line-height:40px;letter-spacing:0.000px;color:#222222;transform:scaleX(1.0955);transform-origin:0.00px 0;">test</div>
<div class="t" style="left:911.00px;top:413.00px;font-size:13.50px;line-height:40px;letter-spacing:0.231px;color:#222222;transform:scaleX(1.1000);transform-origin:0.00px 0;">+966-545454545</div>
<div class="t" style="left:1073.60px;top:413.00px;font-size:13.50px;line-height:40px;letter-spacing:0.000px;color:#222222;transform:scaleX(1.0000);transform-origin:0.00px 0;">-</div>
<div class="t" style="left:1291.60px;top:413.00px;font-size:13.50px;line-height:40px;letter-spacing:0.030px;color:#222222;transform:scaleX(1.1000);transform-origin:0.00px 0;">Gurgaon</div>
<div class="t" style="left:1453.40px;top:413.00px;font-size:13.50px;line-height:40px;letter-spacing:0.273px;color:#222222;transform:scaleX(1.1000);transform-origin:1.00px 0;">India</div>
<div class="t" style="left:428.20px;top:465.00px;font-size:13.50px;line-height:40px;letter-spacing:0.000px;color:#222222;transform:scaleX(1.0000);transform-origin:0.00px 0;">2</div>
<div class="t" style="left:473.60px;top:465.00px;font-size:13.50px;line-height:40px;letter-spacing:0.727px;color:#222222;transform:scaleX(1.1000);transform-origin:1.00px 0;">rr</div>
<div class="t" style="left:691.50px;top:465.00px;font-size:13.50px;line-height:40px;letter-spacing:0.727px;color:#222222;transform:scaleX(1.1000);transform-origin:1.00px 0;">rr</div>
<div class="t" style="left:911.00px;top:465.00px;font-size:13.50px;line-height:40px;letter-spacing:0.280px;color:#222222;transform:scaleX(1.1000);transform-origin:0.00px 0;">+966-566666666</div>
<div class="t" style="left:1073.60px;top:465.00px;font-size:13.50px;line-height:40px;letter-spacing:0.000px;color:#222222;transform:scaleX(1.0000);transform-origin:0.00px 0;">-</div>
<div class="t" style="left:1291.60px;top:465.00px;font-size:13.50px;line-height:40px;letter-spacing:0.030px;color:#222222;transform:scaleX(1.1000);transform-origin:0.00px 0;">Gurgaon</div>
<div class="t" style="left:1453.40px;top:465.00px;font-size:13.50px;line-height:40px;letter-spacing:0.273px;color:#222222;transform:scaleX(1.1000);transform-origin:1.00px 0;">India</div>
<div class="t" style="left:427.70px;top:517.00px;font-size:13.50px;line-height:40px;letter-spacing:0.000px;color:#222222;transform:scaleX(1.0000);transform-origin:1.00px 0;">3</div>
<div class="t" style="left:474.60px;top:517.00px;font-size:13.50px;line-height:40px;letter-spacing:0.000px;color:#222222;transform:scaleX(1.1000);transform-origin:0.00px 0;">www</div>
<div class="t" style="left:692.50px;top:517.00px;font-size:13.50px;line-height:40px;letter-spacing:0.000px;color:#222222;transform:scaleX(1.0375);transform-origin:0.00px 0;">ww</div>
<div class="t" style="left:911.00px;top:517.00px;font-size:13.50px;line-height:40px;letter-spacing:0.280px;color:#222222;transform:scaleX(1.1000);transform-origin:0.00px 0;">+966-565666666</div>
<div class="t" style="left:1073.60px;top:517.00px;font-size:13.50px;line-height:40px;letter-spacing:0.000px;color:#222222;transform:scaleX(1.0000);transform-origin:0.00px 0;">-</div>
<div class="t" style="left:1291.60px;top:517.00px;font-size:13.50px;line-height:40px;letter-spacing:0.030px;color:#222222;transform:scaleX(1.1000);transform-origin:0.00px 0;">Gurgaon</div>
<div class="t" style="left:1453.40px;top:517.00px;font-size:13.50px;line-height:40px;letter-spacing:0.273px;color:#222222;transform:scaleX(1.1000);transform-origin:1.00px 0;">India</div>
<div class="t" style="left:1455.60px;top:362.00px;font-size:14.50px;line-height:40px;letter-spacing:0.600px;color:#111111;transform:scaleX(1.0800);transform-origin:0.00px 0;-webkit-text-stroke:0.35px currentColor;width:36.48px;overflow:hidden;">Country</div>
</body></html>
